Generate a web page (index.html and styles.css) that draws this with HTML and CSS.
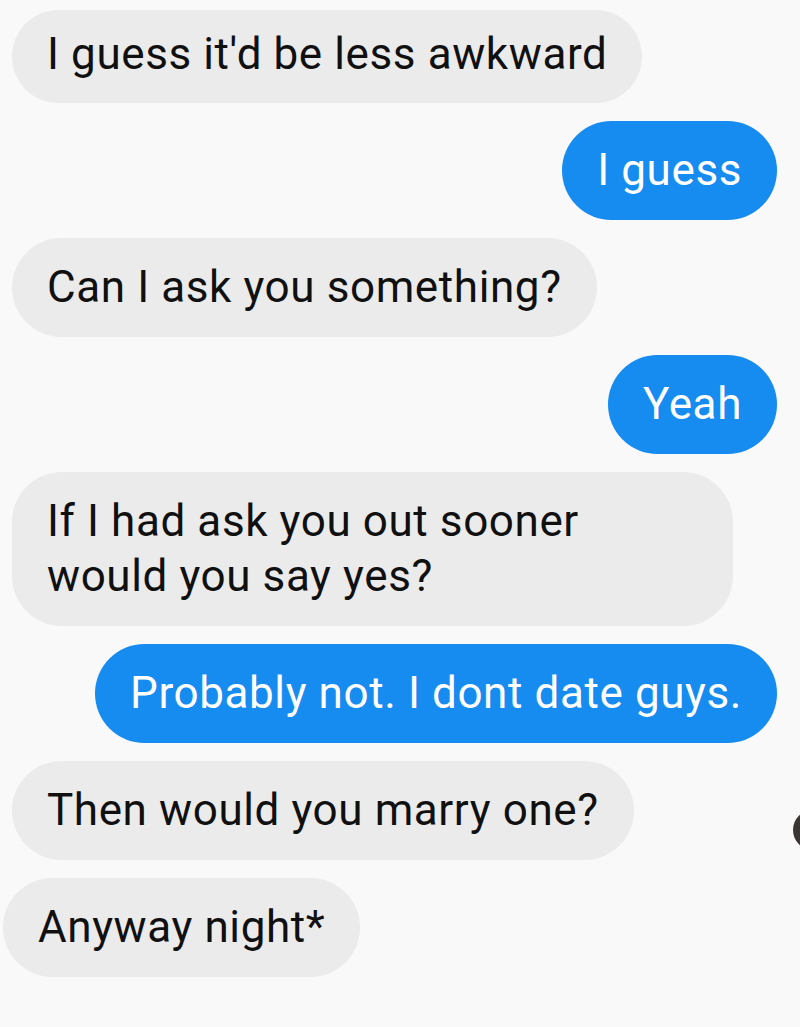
FILE: index.html
```html
<!DOCTYPE html>
<html lang="en">

<head>
    <meta charset="UTF-8">
    <meta name="viewport" content="width=device-width, initial-scale=1.0">
    <title>chat</title>
    <link rel="stylesheet" href="styles.css">
</head>

<body>
    <div id="chat">
        <div class="msg them first">I guess it'd be less awkward</div>
        <div class="msg me">I guess</div>
        <div class="msg them">Can I ask you something?</div>
        <div class="msg me">Yeah</div>
        <div class="msg them wrap">If I had ask you out sooner<br>would you say yes?</div>
        <div class="msg me">Probably not. I dont date guys.</div>
        <div class="msg them">Then would you marry one?</div>
        <div class="msg them last">Anyway night*</div>
        <div class="avatar"></div>
    </div>
</body>

</html>
```

FILE: styles.css
```css
html,
body {
    margin: 0;
    padding: 0;
    background-color: #f9f9f9;
}

#chat {
    position: relative;
    display: flex;
    flex-direction: column;
    gap: 18px;
    padding: 10px 23px 0 12px;
    height: 1017px;
    overflow: hidden;
    font-family: Roboto, "Open Sans", sans-serif;
    font-size: 44px;
    line-height: 55px;
    letter-spacing: 0.6px;
}

.msg {
    padding: 22px 35px;
    border-radius: 50px;
    white-space: nowrap;
}

.them {
    align-self: flex-start;
    background-color: #ebebeb;
    color: #101010;
}

.me {
    align-self: flex-end;
    background-color: #168bf0;
    color: #fff;
}

.first {
    padding-top: 17px;
    padding-bottom: 21px;
}

.wrap {
    width: 651px;
}

.last {
    margin-left: -9px;
}

.avatar {
    position: absolute;
    left: 793px;
    top: 810px;
    width: 40px;
    height: 40px;
    border-radius: 50%;
    background-color: #3b3632;
}
```
